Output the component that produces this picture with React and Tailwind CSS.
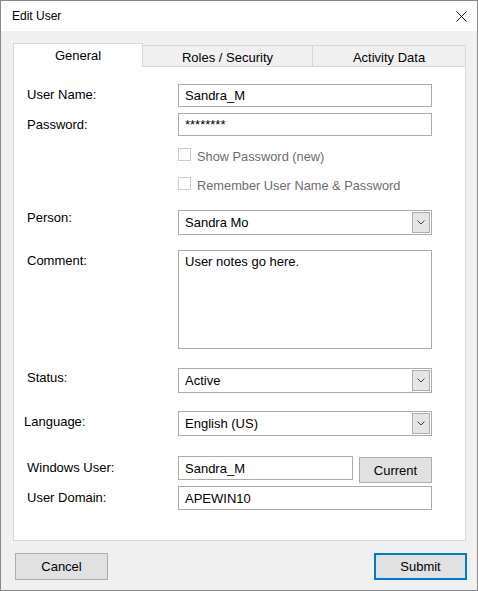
import React from "react";

const font = { fontFamily: '"Liberation Sans", Arial, sans-serif' };

function Field({ label, top, labelTop, labelLeft = "pl-[13px]", children }) {
  return (
    <div className={`flex items-start ${top}`}>
      <div className={`w-[164px] shrink-0 ${labelLeft} ${labelTop} leading-[15px]`}>{label}</div>
      {children}
    </div>
  );
}

function TextBox({ value, w = "w-[254px]", h = "h-[23px]" }) {
  return (
    <div className={`${w} ${h} border border-[#ababab] bg-white pl-[6px] flex items-center leading-[15px]`}>
      {value}
    </div>
  );
}

function Combo({ value }) {
  return (
    <div className="w-[254px] h-[25px] border border-[#ababab] bg-white flex items-center justify-between pl-[6px] pr-px leading-[15px]">
      <span>{value}</span>
      <div className="w-[18px] h-[21px] bg-[#e5e5e5] border border-[#acacac] flex items-center justify-center">
        <svg width="8" height="5" viewBox="0 0 8 5">
          <path d="M0.5 0.5 L4 4 L7.5 0.5" fill="none" stroke="#444" strokeWidth="1" />
        </svg>
      </div>
    </div>
  );
}

function Check({ label, top }) {
  return (
    <div className={`flex items-start h-[13px] pl-[164px] ${top}`}>
      <div className="w-[13px] h-[13px] border border-[#cccccc] bg-white shrink-0" />
      <span className="ml-[6px] mt-px text-[#6d6d6d] leading-[15px] text-[12.8px]">{label}</span>
    </div>
  );
}

export default function App() {
  return (
    <div
      className="w-[478px] h-[591px] border border-[#888888] bg-[#f0f0f0] flex flex-col text-[13px] text-black overflow-hidden"
      style={font}
    >
      <div className="h-[30px] bg-white flex items-center justify-between pl-[11px] pr-[10px] shrink-0">
        <span className="text-[12px]">Edit User</span>
        <svg width="11" height="11" viewBox="0 0 11 11">
          <path d="M0.5 0.5 L10.5 10.5 M10.5 0.5 L0.5 10.5" stroke="#111" strokeWidth="1" />
        </svg>
      </div>

      <div className="pl-[12px] pt-[12px]">
        <div className="flex items-end h-[23px]">
          <div className="w-[130px] h-[24px] -mb-px relative z-10 bg-white border border-b-0 border-[#d9d9d9] flex justify-center pt-[4px] leading-[15px]">
            General
          </div>
          <div className="w-[170px] h-[21px] border-t border-r border-[#d9d9d9] flex justify-center pt-[4px] leading-[15px]">
            Roles / Security
          </div>
          <div className="w-[153px] h-[21px] border-t border-r border-[#d9d9d9] flex justify-center pt-[4px] leading-[15px]">
            Activity Data
          </div>
        </div>

        <div className="w-[453px] h-[475px] bg-white border border-[#d9d9d9] flex flex-col">
          <Field label="User Name:" top="mt-[17px]" labelTop="pt-[3px]">
            <TextBox value="Sandra_M" />
          </Field>
          <Field label="Password:" top="mt-[6px]" labelTop="pt-[4px]">
            <TextBox value="********" />
          </Field>
          <Check label="Show Password (new)" top="mt-[12px]" />
          <Check label="Remember User Name & Password" top="mt-[16px]" />
          <Field label="Person:" top="mt-[20px]" labelTop="pt-0">
            <Combo value="Sandra Mo" />
          </Field>
          <Field label="Comment:" top="mt-[15px]" labelTop="pt-[3px]">
            <div className="w-[254px] h-[99px] border border-[#ababab] bg-white pl-[6px] pt-[3px] leading-[15px]">
              User notes go here.
            </div>
          </Field>
          <Field label="Status:" top="mt-[19px]" labelTop="pt-[2px]">
            <Combo value="Active" />
          </Field>
          <Field label="Language:" top="mt-[18px]" labelTop="pt-[3px]" labelLeft="pl-[10px]">
            <Combo value="English (US)" />
          </Field>
          <Field label="Windows User:" top="mt-[20px]" labelTop="pt-[4px]">
            <TextBox value="Sandra_M" w="w-[175px]" h="h-[24px]" />
            <div className="ml-[6px] mt-px w-[73px] h-[26px] bg-[#e1e1e1] border border-[#adadad] flex items-center justify-center leading-[15px]">
              Current
            </div>
          </Field>
          <Field label="User Domain:" top="mt-[3px]" labelTop="pt-[4px]">
            <TextBox value="APEWIN10" h="h-[24px]" />
          </Field>
        </div>
      </div>

      <div className="flex justify-between pl-[14px] pr-[10px] mt-[12px]">
        <div className="w-[93px] h-[27px] bg-[#e1e1e1] border border-[#adadad] flex items-center justify-center leading-[15px]">
          Cancel
        </div>
        <div className="w-[93px] h-[27px] bg-[#e1e1e1] border-2 border-[#0078d7] flex items-center justify-center leading-[15px]">
          Submit
        </div>
      </div>
    </div>
  );
}
